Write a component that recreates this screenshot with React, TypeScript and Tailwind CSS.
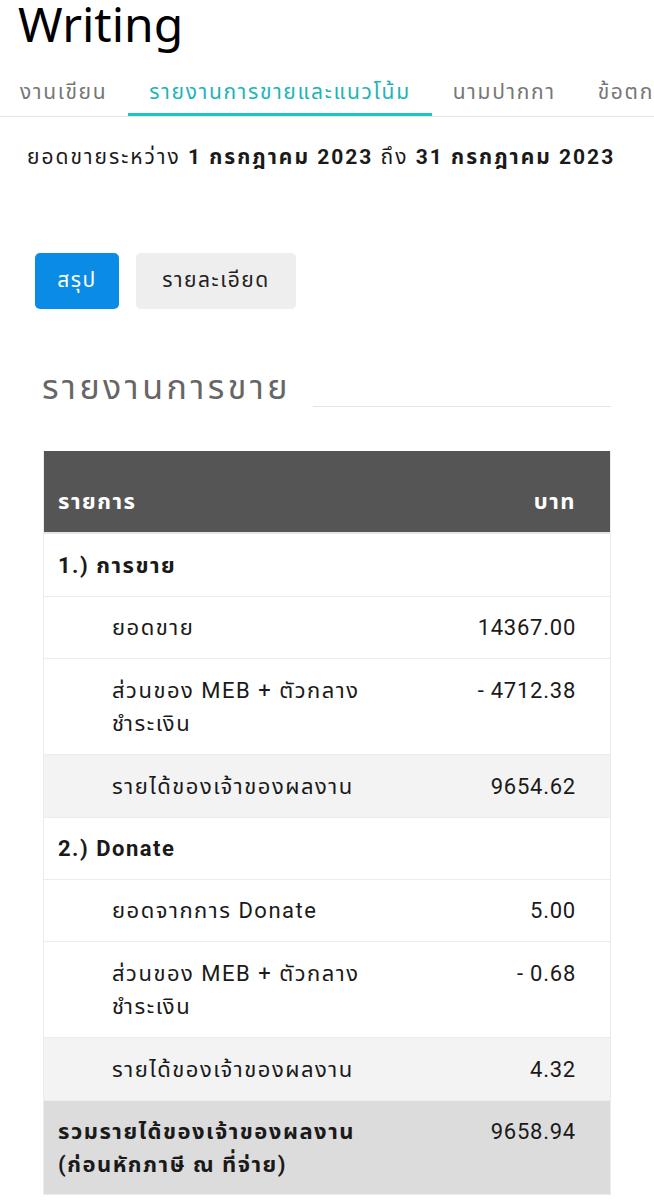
import React from "react";

const font = { fontFamily: 'Roboto, "Noto Sans", "Noto Sans Thai", sans-serif' };

type Row = { label: React.ReactNode; value?: string; kind: "section" | "item" | "sub" | "total"; two?: boolean };

const share = (
  <>
    ส่วนของ MEB + ตัวกลาง
    <br />
    ชำระเงิน
  </>
);

const rows: Row[] = [
  { label: "1.) การขาย", kind: "section" },
  { label: "ยอดขาย", value: "14367.00", kind: "item" },
  { label: share, value: "- 4712.38", kind: "item", two: true },
  { label: "รายได้ของเจ้าของผลงาน", value: "9654.62", kind: "sub" },
  { label: "2.) Donate", kind: "section" },
  { label: "ยอดจากการ Donate", value: "5.00", kind: "item" },
  { label: share, value: "- 0.68", kind: "item", two: true },
  { label: "รายได้ของเจ้าของผลงาน", value: "4.32", kind: "sub" },
  {
    label: (
      <>
        รวมรายได้ของเจ้าของผลงาน
        <br />
        (ก่อนหักภาษี ณ ที่จ่าย)
      </>
    ),
    value: "9658.94",
    kind: "total",
  },
];

export default function App() {
  return (
    <div className="w-[654px] bg-white text-[#1a1a1a] overflow-hidden" style={font}>
      <h1 className="pl-[18px] text-[48px] leading-[48px] font-normal text-black" style={{ fontFamily: '"Noto Sans", sans-serif' }}>
        Writing
      </h1>
      <div className="mt-[29px] flex whitespace-nowrap border-b border-[#e6e6e6] text-[21px] leading-[30px] tracking-[1.7px] text-[#777]">
        <div className="pl-[20px] pr-[21px] pb-[6px] border-b-[3px] border-transparent">งานเขียน</div>
        <div className="px-[21px] pb-[6px] border-b-[3px] border-[#1cc7c1] text-[#1cb5b5]">รายงานการขายและแนวโน้ม</div>
        <div className="px-[21px] pb-[6px] border-b-[3px] border-transparent">นามปากกา</div>
        <div className="px-[21px] pb-[6px] border-b-[3px] border-transparent">ข้อตกลง</div>
      </div>
      <p className="mt-[24px] pl-[27px] text-[21px] leading-[32px] tracking-[2px] whitespace-nowrap">
        ยอดขายระหว่าง <b>1 กรกฎาคม 2023</b> ถึง <b>31 กรกฎาคม 2023</b>
      </p>
      <div className="mt-[80px] pl-[35px] flex gap-[17px]">
        <button className="w-[84px] h-[56px] rounded-[5px] bg-[#0a8be6] text-white text-[21px] tracking-[1.5px]">สรุป</button>
        <button className="w-[160px] h-[56px] rounded-[5px] bg-[#eeeeee] text-[#222] text-[21px] tracking-[1.5px]">รายละเอียด</button>
      </div>
      <div className="mt-[56px] ml-[42px] mr-[43px] flex items-end gap-[22px]">
        <h2 className="text-[34px] leading-[44px] tracking-[3.5px] text-[#666] whitespace-nowrap">รายงานการขาย</h2>
        <div className="flex-1 border-b border-[#e3e3e3] mb-[2px]"></div>
      </div>
      <div className="mt-[42px] ml-[43px] mr-[43px] border-x border-[#ececec] text-[22px] leading-[33px]">
        <div className="flex justify-between bg-[#555555] text-white font-bold pt-[34px] pb-[14px] pl-[14px] pr-[34px] border-b-2 border-[#e5e5e5] tracking-[1.5px]">
          <span>รายการ</span>
          <span>บาท</span>
        </div>
        {rows.map((r, i) => {
          const bg = r.kind === "sub" ? "bg-[#f3f3f3]" : r.kind === "total" ? "bg-[#dcdcdc]" : "bg-white";
          const pad = r.kind === "item" || r.kind === "sub" ? "pl-[68px]" : "pl-[14px]";
          const bold = r.kind === "section" || r.kind === "total" ? "font-bold" : "";
          const vpad =
            r.kind === "total"
              ? "pt-[14px] pb-[13px]"
              : r.two || r.kind === "sub" || i === 0
              ? "pt-[15px] pb-[14px]"
              : "pt-[14px] pb-[14px]";
          return (
            <div key={i} className={`flex justify-between gap-4 ${bg} ${vpad} pr-[34px] border-b border-[#ececec]`}>
              <div className={`${pad} ${bold} tracking-[1.5px] whitespace-nowrap`}>{r.label}</div>
              {r.value && <div className="text-right tracking-[0.75px]">{r.value}</div>}
            </div>
          );
        })}
      </div>
    </div>
  );
}
